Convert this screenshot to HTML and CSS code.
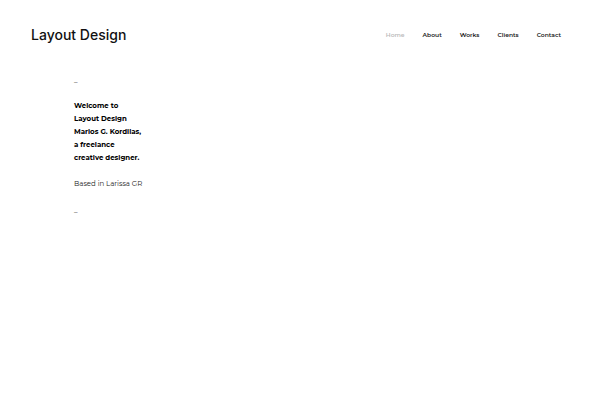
FILE: index.html
```html
<!DOCTYPE html>
<html lang="en">
<head>
<meta charset="utf-8">
<title>Layout Design</title>
<meta name="viewport" content="width=device-width, initial-scale=1">
<link rel="stylesheet" href="styles.css">
</head>
<body>
<header class="header">
  <a class="logo" href="#">Layout Design</a>
  <nav class="nav">
    <a class="nav-link current" href="#">Home</a>
    <a class="nav-link" href="#">About</a>
    <a class="nav-link" href="#">Works</a>
    <a class="nav-link" href="#">Clients</a>
    <a class="nav-link" href="#">Contact</a>
  </nav>
</header>
<main class="intro">
  <p>_</p>
  <h1 class="welcome">Welcome to<br>Layout Design<br>Marios G. Kordilas,<br>a freelance<br>creative designer.</h1>
  <p>Based in Larissa GR</p>
  <p>_</p>
</main>
</body>
</html>
```
FILE: styles.css
```css
body {
  margin: 0;
  background: #fff;
  color: #222;
  font-family: Montserrat, Inter, sans-serif;
}

.header {
  display: flex;
  justify-content: space-between;
  align-items: center;
  padding: 24px 39px 24px 31px;
}

.logo {
  color: #111;
  font-family: Inter, sans-serif;
  font-size: 14px;
  font-weight: 500;
  line-height: 20px;
  text-decoration: none;
}

.nav {
  display: flex;
  gap: 18px;
}

.nav-link {
  color: #222;
  font-size: 6px;
  font-weight: 600;
  line-height: 22px;
  text-decoration: none;
}

.current {
  color: #bbb;
}

.intro {
  padding: 3px 74px;
  font-size: 7px;
  line-height: 13px;
}

.intro p {
  margin: 0 0 13px;
}

.welcome {
  margin: 0 0 13px;
  color: #000;
  font-size: 7px;
  font-weight: 700;
}
```
